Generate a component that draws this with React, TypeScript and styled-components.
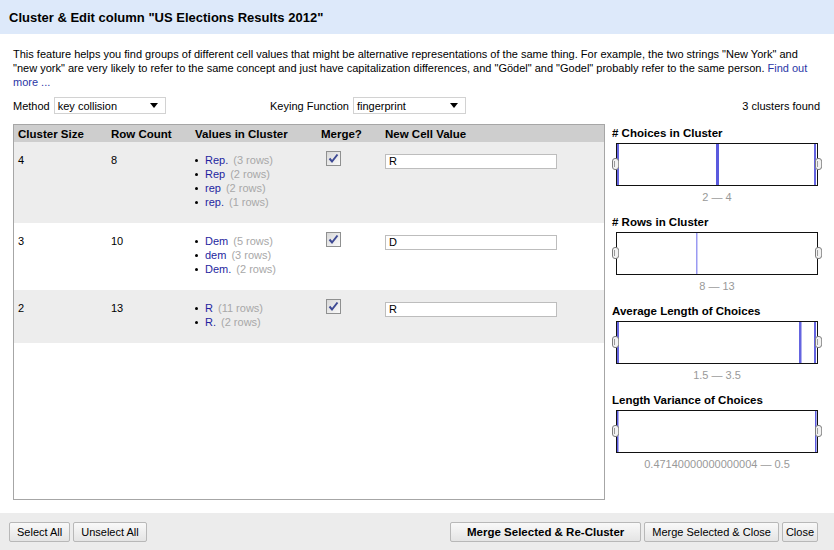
import React from "react";
import styled, { createGlobalStyle } from "styled-components";

const GlobalStyle = createGlobalStyle`
  html, body { margin: 0; padding: 0; background: #fff; }
  body { font-family: "Liberation Sans", Arial, sans-serif; font-size: 11px; color: #000; }
  * { box-sizing: border-box; }
`;

const Dialog = styled.div`
  width: 834px;
  height: 550px;
  display: flex;
  flex-direction: column;
  overflow: hidden;
`;

const Header = styled.div`
  height: 34px;
  flex: none;
  background: #dde9fa;
  display: flex;
  align-items: center;
  padding: 0 9px;
  font-size: 13px;
  font-weight: bold;
`;

const Body = styled.div`
  flex: 1;
  display: flex;
  flex-direction: column;
  padding: 13px 13px 0 13px;
`;

const Description = styled.p`
  margin: 0;
  line-height: 14px;
`;

const Link = styled.a`
  color: #2a36a6;
  text-decoration: none;
`;

const Controls = styled.div`
  display: grid;
  grid-template-columns: 257px auto 1fr;
  align-items: center;
  height: 17px;
  margin-top: 8px;
`;

const Field = styled.div`
  display: flex;
  align-items: center;
  gap: 4px;
`;

const Select = styled.div<{ $w: number }>`
  width: ${(p) => p.$w}px;
  height: 17px;
  border: 1px solid #d2d2d2;
  background: #fff;
  display: flex;
  align-items: center;
  justify-content: space-between;
  padding: 0 7px 0 3px;
`;

const Arrow = styled.span`
  width: 0;
  height: 0;
  border-left: 4px solid transparent;
  border-right: 4px solid transparent;
  border-top: 5px solid #000;
`;

const Found = styled.div`
  text-align: right;
  padding-right: 1px;
`;

const Main = styled.div`
  display: flex;
  gap: 7px;
  margin-top: 10px;
  height: 376px;
`;

const Table = styled.div`
  flex: none;
  width: 592px;
  height: 376px;
  border: 1px solid #a6a6a6;
  background: #fff;
  display: flex;
  flex-direction: column;
`;

const cols = "93px 84px 126px 64px 1fr";

const HeadRow = styled.div`
  display: grid;
  grid-template-columns: ${cols};
  height: 17px;
  align-items: center;
  background: #cecece;
  font-weight: bold;
  font-size: 11.5px;
`;

const HeadCell = styled.div`
  padding-left: 4px;
  white-space: nowrap;
`;

const Row = styled.div<{ $shaded: boolean }>`
  display: grid;
  grid-template-columns: ${cols};
  align-items: start;
  padding: 11px 0 14px;
  background: ${(p) => (p.$shaded ? "#ededed" : "#fff")};
  line-height: 14px;
`;

const Cell = styled.div`
  padding-left: 4px;
`;

const ValueList = styled.ul`
  margin: 0;
  padding: 0;
  list-style: none;
`;

const ValueItem = styled.li`
  display: flex;
  align-items: center;
  line-height: 14px;
  &::before {
    content: "";
    width: 3px;
    height: 3px;
    border-radius: 50%;
    background: #000;
    margin: 0 7px 0 0;
  }
`;

const ValueText = styled.span`
  color: #1f1fa0;
`;

const RowsText = styled.span`
  color: #a8a8a8;
  margin-left: 5px;
`;

const CheckBox = styled.span`
  display: inline-flex;
  width: 15px;
  height: 15px;
  margin: -4px 0 0 5px;
  border: 1px solid #8f9090;
  background: linear-gradient(135deg, #d8d8d8, #fafafa);
  align-items: center;
  justify-content: center;
`;

const TextInput = styled.div`
  width: 172px;
  height: 15px;
  margin-top: 1px;
  border: 1px solid #bdbdbd;
  background: #fff;
  padding-left: 3px;
  line-height: 13px;
`;

const Side = styled.div`
  flex: 1;
  min-width: 0;
  padding-top: 2px;
`;

const ChartSection = styled.div`
  padding-bottom: 11px;
`;

const ChartTitle = styled.div`
  font-weight: bold;
  font-size: 11.5px;
  line-height: 14px;
  white-space: nowrap;
`;

const ChartBox = styled.div`
  position: relative;
  width: 202px;
  height: 43px;
  margin: 3px 0 0 4px;
  border: 1px solid #111;
  background: #fff;
`;

const ChartSvg = styled.svg`
  display: block;
`;

const Handle = styled.span<{ $side: "left" | "right" }>`
  position: absolute;
  top: 14px;
  ${(p) => (p.$side === "left" ? "left: -5px;" : "right: -5px;")}
  width: 7px;
  height: 12px;
  border: 1px solid #7d7d7d;
  border-radius: 3px;
  background: #f2f2f2;
  &::after {
    content: "";
    position: absolute;
    left: 1px;
    top: 2px;
    width: 3px;
    height: 6px;
    border-left: 1px solid #9a9a9a;
    border-right: 1px solid #9a9a9a;
  }
`;

const ChartLabel = styled.div`
  width: 202px;
  margin: 4px 0 0 4px;
  text-align: center;
  color: #999;
  line-height: 14px;
  white-space: nowrap;
`;

const Footer = styled.div`
  height: 37px;
  flex: none;
  margin-top: 13px;
  background: #ececec;
  display: flex;
  align-items: center;
  justify-content: space-between;
  padding: 0 16px 0 9px;
`;

const ButtonGroup = styled.div`
  display: flex;
  gap: 3px;
`;

const Button = styled.button<{ $primary?: boolean; $tight?: boolean }>`
  height: 20px;
  border: 1px solid #b8b8b8;
  border-radius: 2px;
  background: linear-gradient(#f9f9f9, #e4e4e4);
  font-family: "Liberation Sans", Arial, sans-serif;
  font-size: ${(p) => (p.$primary ? "11.5px" : "11px")};
  font-weight: ${(p) => (p.$primary ? "bold" : "normal")};
  padding: ${(p) => (p.$primary ? "0 16px" : p.$tight ? "0 3px" : "0 7px")};
  color: #000;
`;

type Bar = { x: number; w: number; c: string };

const rows = [
  { size: 4, count: 8, values: [["Rep.", 3], ["Rep", 2], ["rep", 2], ["rep.", 1]], nv: "R", shaded: true },
  { size: 3, count: 10, values: [["Dem", 5], ["dem", 3], ["Dem.", 2]], nv: "D", shaded: false },
  { size: 2, count: 13, values: [["R", 11], ["R.", 2]], nv: "R", shaded: true },
] as const;

const charts: { title: string; label: string; bars: Bar[] }[] = [
  {
    title: "# Choices in Cluster",
    label: "2 \u2014 4",
    bars: [
      { x: 0, w: 2, c: "#6464e0" },
      { x: 99, w: 3, c: "#5a5ade" },
      { x: 197, w: 2, c: "#6464e0" },
    ],
  },
  {
    title: "# Rows in Cluster",
    label: "8 \u2014 13",
    bars: [{ x: 79, w: 1.5, c: "#9a9af2" }],
  },
  {
    title: "Average Length of Choices",
    label: "1.5 \u2014 3.5",
    bars: [
      { x: 0, w: 2, c: "#6464e0" },
      { x: 182, w: 2.5, c: "#6464e0" },
      { x: 197, w: 2, c: "#6464e0" },
    ],
  },
  {
    title: "Length Variance of Choices",
    label: "0.47140000000000004 \u2014 0.5",
    bars: [
      { x: 0, w: 1.5, c: "#5a5ade" },
      { x: 198, w: 1.5, c: "#5a5ade" },
    ],
  },
];

const Check = () => (
  <svg width="11" height="11" viewBox="0 0 11 11">
    <path d="M1.5 5.5 L4 8.5 L9.5 1.5" fill="none" stroke="#3e4a94" strokeWidth="2" />
  </svg>
);

export default function App() {
  return (
    <>
      <GlobalStyle />
      <Dialog>
        <Header>Cluster &amp; Edit column "US Elections Results 2012"</Header>
        <Body>
          <Description>
            This feature helps you find groups of different cell values that might be alternative representations of the same thing. For example, the two strings "New York" and
            <br />
            "new york" are very likely to refer to the same concept and just have capitalization differences, and "Gödel" and "Godel" probably refer to the same person.{" "}
            <Link href="#">
              Find out
              <br />
              more ...
            </Link>
          </Description>
          <Controls>
            <Field>
              <span>Method</span>
              <Select $w={112}>
                <span>key collision</span>
                <Arrow />
              </Select>
            </Field>
            <Field>
              <span>Keying Function</span>
              <Select $w={113}>
                <span>fingerprint</span>
                <Arrow />
              </Select>
            </Field>
            <Found>3 clusters found</Found>
          </Controls>
          <Main>
            <Table>
              <HeadRow>
                <HeadCell>Cluster Size</HeadCell>
                <HeadCell>Row Count</HeadCell>
                <HeadCell>Values in Cluster</HeadCell>
                <HeadCell>Merge?</HeadCell>
                <HeadCell>New Cell Value</HeadCell>
              </HeadRow>
              {rows.map((r, i) => (
                <Row key={i} $shaded={r.shaded}>
                  <Cell>{r.size}</Cell>
                  <Cell>{r.count}</Cell>
                  <Cell>
                    <ValueList>
                      {r.values.map(([v, n]) => (
                        <ValueItem key={v}>
                          <ValueText>{v}</ValueText>
                          <RowsText>({n} rows)</RowsText>
                        </ValueItem>
                      ))}
                    </ValueList>
                  </Cell>
                  <Cell>
                    <CheckBox>
                      <Check />
                    </CheckBox>
                  </Cell>
                  <Cell>
                    <TextInput>{r.nv}</TextInput>
                  </Cell>
                </Row>
              ))}
            </Table>
            <Side>
              {charts.map((c) => (
                <ChartSection key={c.title}>
                  <ChartTitle>{c.title}</ChartTitle>
                  <ChartBox>
                    <ChartSvg width="200" height="41" viewBox="0 0 200 41">
                      {c.bars.map((b, j) => (
                        <rect key={j} x={b.x} y={0} width={b.w} height={41} fill={b.c} />
                      ))}
                    </ChartSvg>
                    <Handle $side="left" />
                    <Handle $side="right" />
                  </ChartBox>
                  <ChartLabel>{c.label}</ChartLabel>
                </ChartSection>
              ))}
            </Side>
          </Main>
        </Body>
        <Footer>
          <ButtonGroup>
            <Button>Select All</Button>
            <Button>Unselect All</Button>
          </ButtonGroup>
          <ButtonGroup>
            <Button $primary>Merge Selected &amp; Re-Cluster</Button>
            <Button>Merge Selected &amp; Close</Button>
            <Button $tight>Close</Button>
          </ButtonGroup>
        </Footer>
      </Dialog>
    </>
  );
}
